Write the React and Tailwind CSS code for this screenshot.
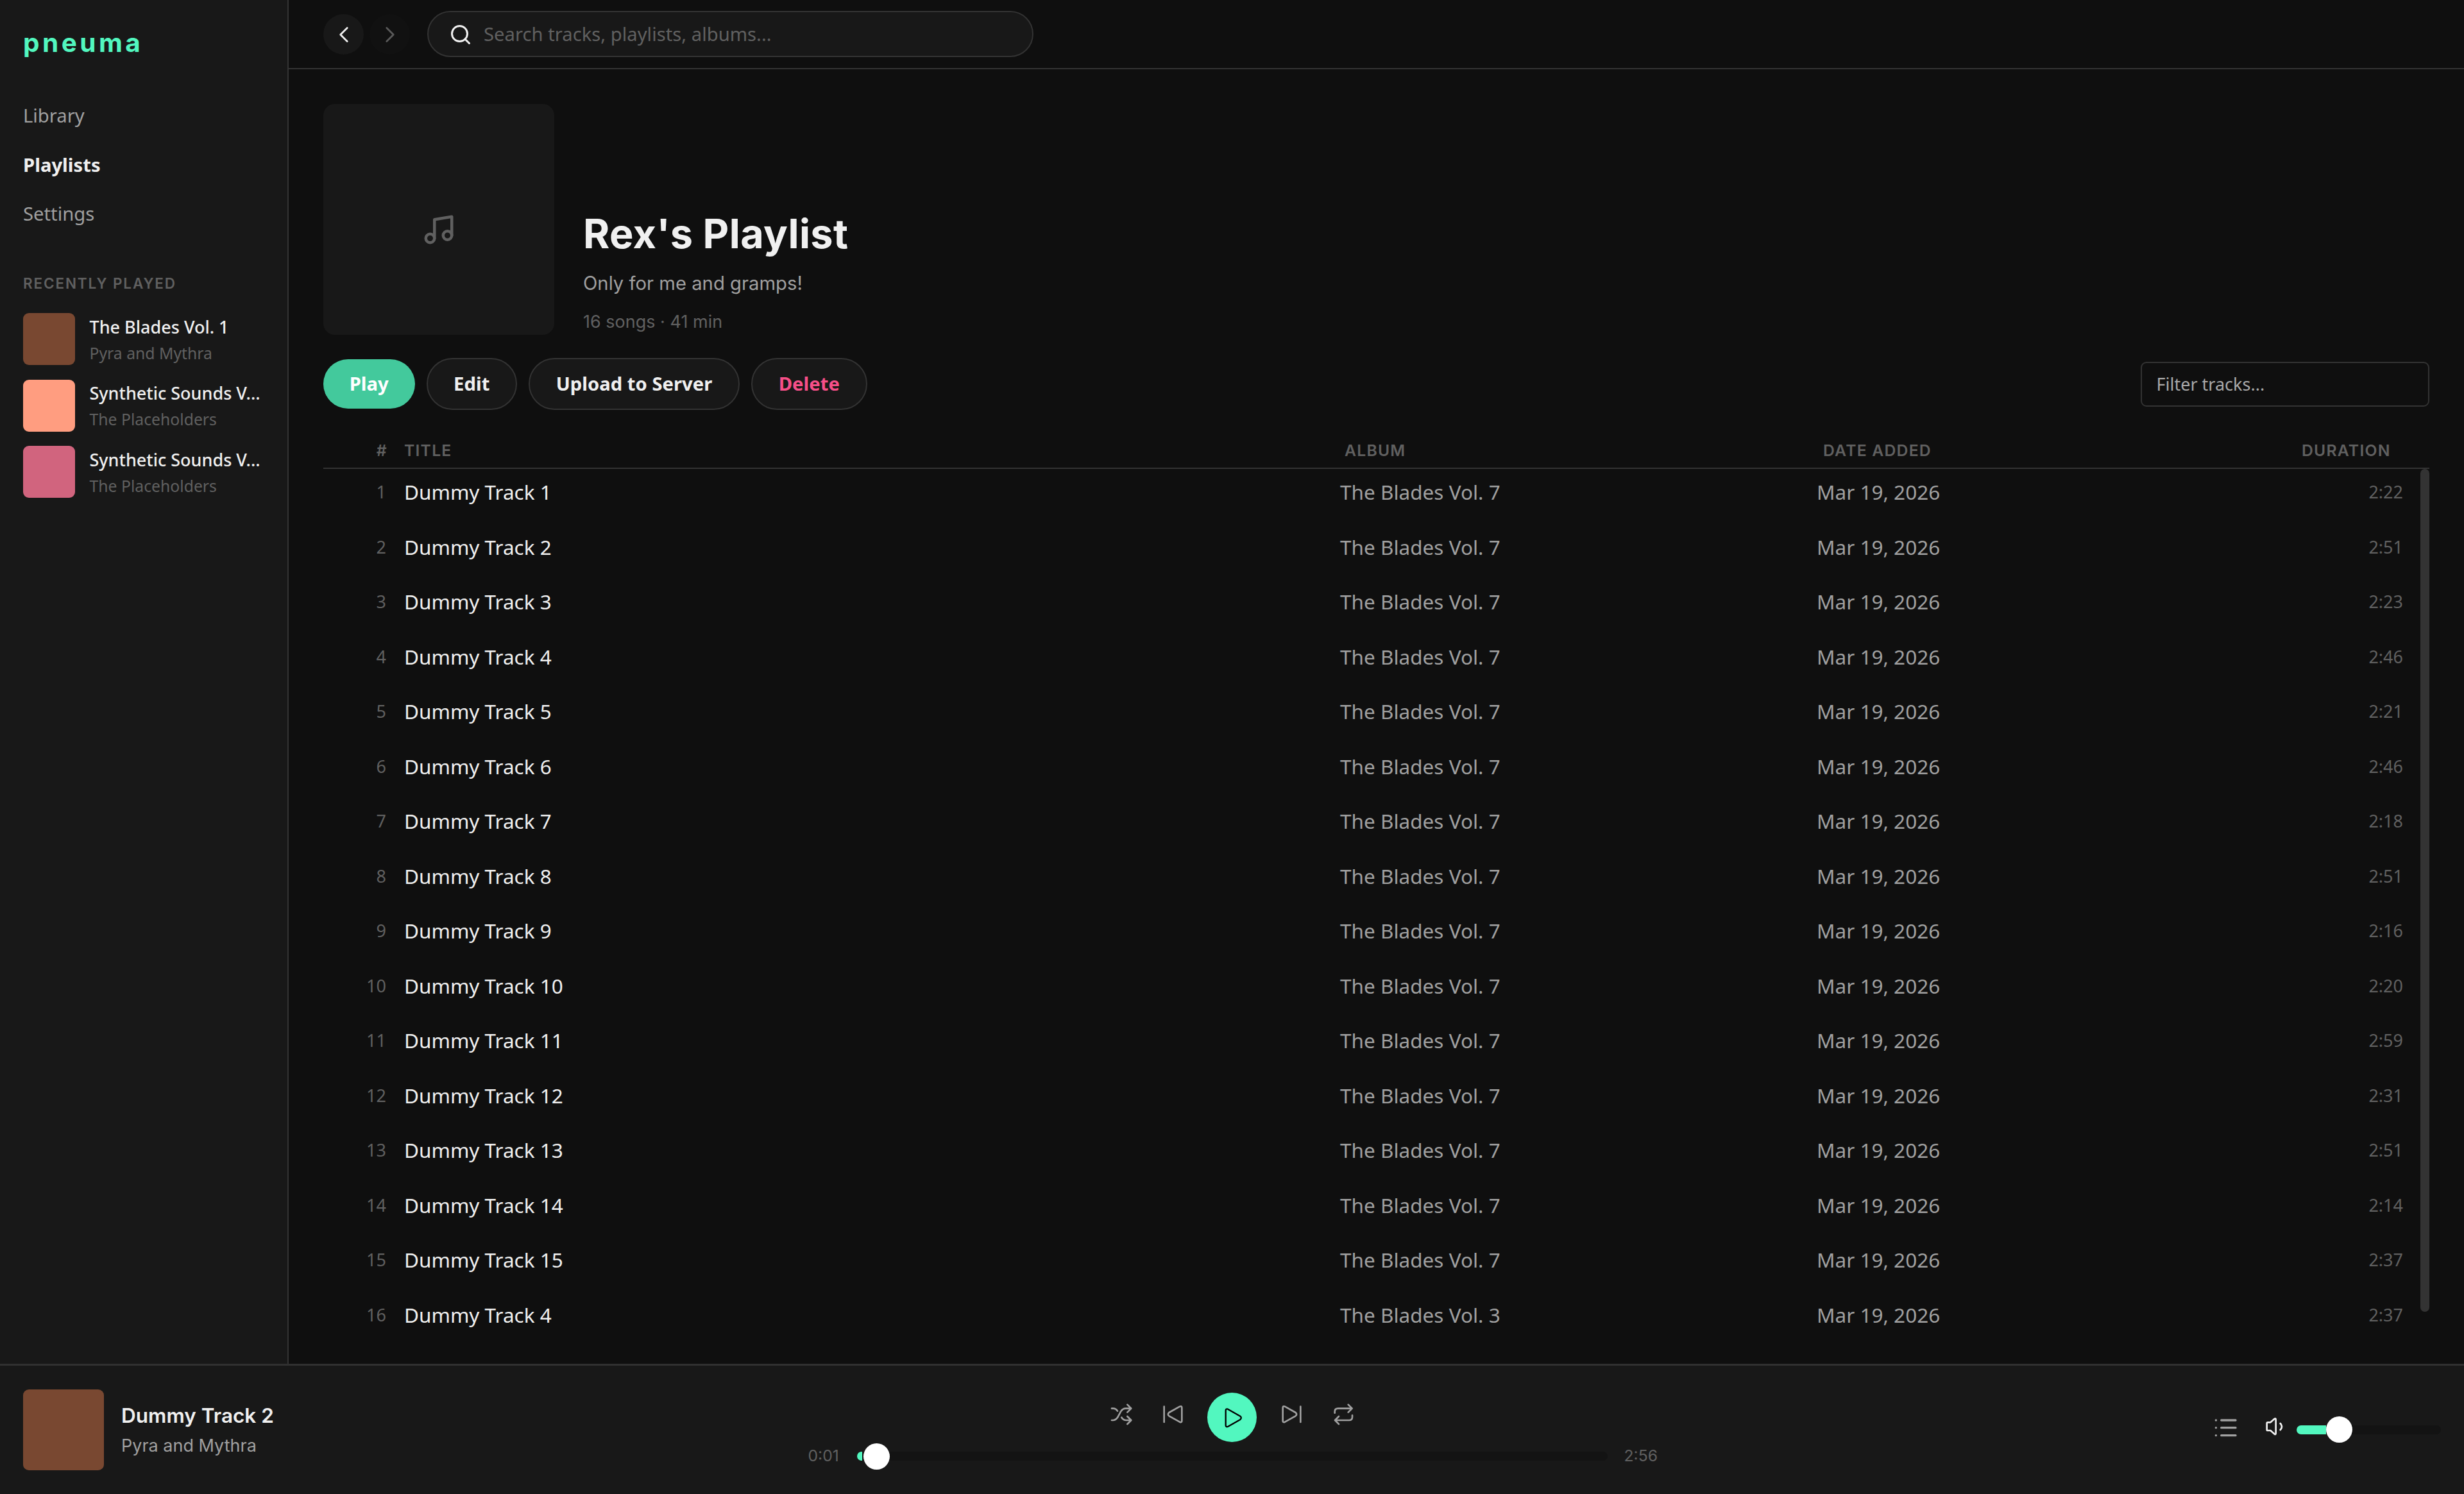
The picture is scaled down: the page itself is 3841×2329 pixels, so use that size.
import React from "react";

const recent = [
  { title: "The Blades Vol. 1", artist: "Pyra and Mythra", color: "bg-[#794831]" },
  { title: "Synthetic Sounds V...", artist: "The Placeholders", color: "bg-[#ff9d80]" },
  { title: "Synthetic Sounds V...", artist: "The Placeholders", color: "bg-[#d1647e]" },
];

const durations = ["2:22", "2:51", "2:23", "2:46", "2:21", "2:46", "2:18", "2:51", "2:16", "2:20", "2:59", "2:31", "2:51", "2:14", "2:37", "2:37"];
const tracks = durations.map((duration, i) => ({
  n: i + 1,
  title: i === 15 ? "Dummy Track 4" : `Dummy Track ${i + 1}`,
  album: i === 15 ? "The Blades Vol. 3" : "The Blades Vol. 7",
  date: "Mar 19, 2026",
  duration,
}));

function Icon({ className, w = 2, box = "0 0 24 24", children }) {
  return (
    <svg className={className} viewBox={box} fill="none" stroke="currentColor" strokeWidth={w} strokeLinecap="round" strokeLinejoin="round">
      {children}
    </svg>
  );
}

function Sidebar() {
  return (
    <aside className="flex w-[450px] shrink-0 flex-col border-r-2 border-[#333] bg-[#181818] px-9 pt-9">
      <div className="h-[60px] font-[Inter] text-[40.5px] leading-[62px] font-bold tracking-[4.45px] text-[#52f7bf]">pneuma</div>
      <nav className="mt-[46px] flex flex-col text-[29.25px]">
        <a className="h-[76.5px] leading-[77px] text-[#a0a0a0]">Library</a>
        <a className="h-[76.5px] leading-[76.5px] font-bold text-[#f0f0f0]">Playlists</a>
        <a className="h-[76.5px] leading-[77px] text-[#a0a0a0]">Settings</a>
      </nav>
      <div className="mt-[52px] h-9 font-[Inter] text-[22.5px] leading-9 font-semibold tracking-[1.85px] text-[#606060]">RECENTLY PLAYED</div>
      <div className="mt-[28.5px] flex flex-col gap-[22.5px]">
        {recent.map((r, i) => (
          <div key={i} className="flex h-[81px] items-center gap-[22.5px]">
            <div className={`h-[81px] w-[81px] shrink-0 rounded-[9px] ${r.color}`} />
            <div className="pt-[2px] whitespace-nowrap">
              <div className="text-[27px] leading-[41px] font-medium text-[#f0f0f0]">{r.title}</div>
              <div className="text-[24.75px] leading-[41px] text-[#606060]">{r.artist}</div>
            </div>
          </div>
        ))}
      </div>
    </aside>
  );
}

function TopBar() {
  return (
    <header className="flex h-[108px] shrink-0 items-center border-b-2 border-[#333] px-[54px]">
      <div className="flex h-[63px] w-[63px] items-center justify-center rounded-full bg-[#181818] pt-[2px] text-[#f0f0f0]">
        <Icon className="h-[42px] w-[42px]" w={1.6}><path d="M15 18l-6-6 6-6" /></Icon>
      </div>
      <div className="ml-[9px] flex h-[63px] w-[63px] items-center justify-center rounded-full bg-[#111] pt-[2px] text-[#5a5a5a]">
        <Icon className="h-[42px] w-[42px]" w={1.6}><path d="M9 18l6-6-6-6" /></Icon>
      </div>
      <div className="ml-[27px] flex h-[72px] w-[945px] items-center rounded-full border-2 border-[#333] bg-[#181818] pt-[2px] pl-8">
        <Icon className="h-9 w-9 text-[#f0f0f0]"><circle cx="11" cy="11" r="8" /><path d="M21 21l-4.35-4.35" /></Icon>
        <span className="ml-[18px] text-[29.25px] text-[#606060]">Search tracks, playlists, albums...</span>
      </div>
    </header>
  );
}

function Hero() {
  return (
    <section className="flex h-[360px] items-end gap-[45px]">
      <div className="flex h-[360px] w-[360px] items-center justify-center rounded-[18px] bg-[#181818] pt-8 text-[#606060]">
        <Icon className="h-[54px] w-[54px]"><path d="M9 18V5l12-2v13" /><circle cx="6" cy="18" r="3" /><circle cx="18" cy="16" r="3" /></Icon>
      </div>
      <div className="flex flex-col font-[Inter]">
        <h1 className="text-[63px] leading-[76px] font-bold tracking-[0.35px] text-[#f0f0f0]">Rex's Playlist</h1>
        <p className="mt-[18px] text-[29.25px] leading-[44px] text-[#a0a0a0]">Only for me and gramps!</p>
        <p className="mt-[18px] text-[27px] leading-[40px] text-[#606060]">16 songs · 41 min</p>
      </div>
    </section>
  );
}

function Actions() {
  return (
    <section className="mt-9 flex h-[81px] items-center gap-[18px] text-[29.25px] font-bold text-[#f0f0f0]">
      <button className="h-[77px] w-[142.5px] rounded-full bg-[#43c99c] pt-px text-white">Play</button>
      <button className="h-[81px] w-[141.5px] rounded-full border-2 border-[#333] bg-[#181818] pt-px">Edit</button>
      <button className="h-[81px] w-[329px] rounded-full border-2 border-[#333] bg-[#181818] pt-px">Upload to Server</button>
      <button className="h-[81px] w-[180.5px] rounded-full border-2 border-[#333] bg-[#181818] pt-px text-[#f74f88]">Delete</button>
      <div className="ml-auto flex h-[70px] w-[450px] items-center rounded-[9px] border-2 border-[#333] pt-px pl-[22.5px] text-[27px] font-normal text-[#a9a9a9]">Filter tracks...</div>
    </section>
  );
}

function Tracks() {
  return (
    <section className="mt-[39px] flex flex-col">
      <div className="flex h-[53px] items-start border-b-2 border-[#333] font-[Inter] text-[24.75px] leading-[48px] font-semibold tracking-[1.2px] text-[#606060]">
        <span className="w-[100px] text-right">#</span>
        <span className="ml-[26px] w-[1466px]">TITLE</span>
        <span className="w-[746px]">ALBUM</span>
        <span className="w-[746px]">DATE ADDED</span>
        <span>DURATION</span>
      </div>
      <div className="flex">
        <div className="flex flex-1 flex-col">
          {tracks.map((t) => (
            <div key={t.n} className="flex h-[85.5px] text-[31.5px] leading-[71px] text-[#a0a0a0]">
              <span className="w-[98px] text-right text-[27px] text-[#606060]">{t.n}</span>
              <span className="ml-[28px] w-[1459px] text-[#f0f0f0]">{t.title}</span>
              <span className="w-[743px]">{t.album}</span>
              <span className="w-[743px]">{t.date}</span>
              <span className="flex-1 pr-[27px] text-right text-[27px] text-[#606060]">{t.duration}</span>
            </div>
          ))}
        </div>
        <div className="h-[1314px] w-[14px] rounded-full bg-[#333]" />
      </div>
    </section>
  );
}

function Controls() {
  return (
    <div className="flex h-[77px] items-center justify-center pl-[2px] text-[#a0a0a0]">
      <Icon className="mb-2 h-[37.33px] w-[37.33px]" w={8} box="90 110 112 112">
        <path d="M99 139h7c9 0 15 4 20 12M99 194h6c12 0 17-6 22-14l14-26c5-9 12-15 24-15h24M145 181c5 9 12 13 22 13h22M172 121l18 18-18 18M172 176l18 18-18 18" />
      </Icon>
      <Icon className="mb-2 ml-[43px] h-[37.33px] w-[37.33px]" w={8} box="332 110 112 112">
        <path d="M346 130v73M419 130q10-4 10 6v61q0 9-10 5l-50-28q-9-8 0-16z" />
      </Icon>
      <div className="ml-[35px] flex h-[77px] w-[77px] items-center justify-center rounded-full bg-[#52f7bf] text-black">
        <Icon className="h-[77px] w-[77px]" w={7} box="547 62 231 231">
          <path d="M633 146q0-10 10-7l58 33q9 8 0 16l-58 33q-10 3-10-7z" />
        </Icon>
      </div>
      <Icon className="mb-2 ml-[36px] h-[37.33px] w-[37.33px]" w={8} box="887 110 112 112">
        <path d="M984 130v73M911 130q-10-4-10 6v61q0 9 10 5l50-28q9-8 0-16z" />
      </Icon>
      <Icon className="mb-2 ml-[43.5px] h-[37.33px] w-[37.33px]" w={8} box="1130 110 112 112">
        <path d="M1144 160v-6q0-15 15-15h66M1207 121l18 18-18 18M1226 171v8q0 15-15 15h-66M1163 176l-18 18 18 18" />
      </Icon>
    </div>
  );
}

function Player() {
  return (
    <footer className="flex h-[203px] shrink-0 items-center border-t-3 border-[#303030] bg-[#181818] px-9 font-[Inter]">
      <div className="flex flex-1 items-center gap-[27px]">
        <div className="h-[126px] w-[126px] rounded-[9px] bg-[#794831]" />
        <div className="pt-px">
          <div className="text-[31.5px] leading-[48px] font-semibold text-[#f0f0f0]">Dummy Track 2</div>
          <div className="mt-px text-[27px] leading-[44px] text-[#a0a0a0]">Pyra and Mythra</div>
        </div>
      </div>
      <div className="flex w-[1350px] flex-col pt-[3px]">
        <Controls />
        <div className="mt-[2px] flex h-[41px] items-center text-[24.75px] text-[#606060]">
          <span className="w-[90px] pl-[14px]">0:01</span>
          <div className="flex h-[14px] flex-1 items-center rounded-full bg-[#131313]">
            <div className="h-[14px] w-2 rounded-l-full bg-[#52f7bf]" />
            <div className="ml-[2px] h-[41px] w-[41px] rounded-full bg-white" />
          </div>
          <span className="w-[90px] pl-[26px]">2:56</span>
        </div>
      </div>
      <div className="flex flex-1 items-center justify-end">
        <Icon className="mr-[40px] mb-[7px] h-[37.33px] w-[38.67px] text-[#a0a0a0]" w={10} box="150 620 116 112">
          <path d="M188 641h67M188 676h67M188 712h67M163 641h.1M163 676h.1M163 712h.1" />
        </Icon>
        <Icon className="mr-[18px] mb-[11px] h-[33.33px] w-[33.33px] text-[#f0f0f0]" w={8} box="385 620 100 100">
          <path d="M399 655q0-4 4-4h13l18-16q7-5 7 3v64q0 8-7 3l-18-16h-13q-4 0-4-4zM462 656q14 15 0 30" />
        </Icon>
        <div className="flex h-[14px] w-[225px] items-center rounded-full bg-[#131313]">
          <div className="h-[14px] w-[46px] rounded-l-full bg-[#52f7bf]" />
          <div className="h-[41px] w-[41px] rounded-full bg-white" />
        </div>
      </div>
    </footer>
  );
}

export default function App() {
  return (
    <div className="flex h-[2329px] w-[3841px] flex-col overflow-hidden bg-[#0f0f0f] font-['Noto_Sans',sans-serif]">
      <div className="flex min-h-0 flex-1">
        <Sidebar />
        <main className="flex min-w-0 flex-1 flex-col">
          <TopBar />
          <div className="flex min-h-0 flex-1 flex-col px-[54px] pt-[54px]">
            <Hero />
            <Actions />
            <Tracks />
          </div>
        </main>
      </div>
      <Player />
    </div>
  );
}
